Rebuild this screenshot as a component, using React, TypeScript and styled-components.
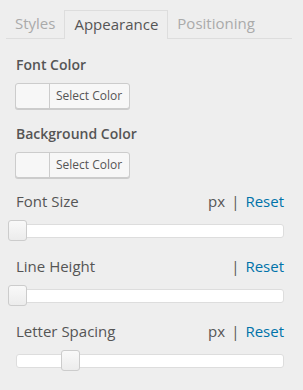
import styled, { createGlobalStyle } from "styled-components";

const GlobalStyle = createGlobalStyle`
    body {
        margin: 0;
        background: #eeeeee;
        font-family: "Open Sans", "Liberation Sans", sans-serif;
        color: #555555;
    }
`;

const Panel = styled.div`
    width: 303px;
    height: 390px;
    padding-top: 10px;
    box-sizing: border-box;
`;

const TabBar = styled.div`
    display: flex;
    margin: 0 11px 0 6px;
    border-bottom: 1px solid #dddddd;
    height: 28px;
`;

const Tab = styled.div<{ $active?: boolean }>`
    padding: 0 ${(p) => (p.$active ? "9px" : "9px")};
    font-size: 15px;
    line-height: 27px;
    box-sizing: border-box;
    color: ${(p) => (p.$active ? "#555555" : "#aaaaaa")};
    border: ${(p) => (p.$active ? "1px solid #dddddd" : "none")};
    border-bottom: none;
    height: ${(p) => (p.$active ? "29px" : "28px")};
    margin-bottom: ${(p) => (p.$active ? "-1px" : "0")};
    background: ${(p) => (p.$active ? "#eeeeee" : "transparent")};
`;

const Content = styled.div`
    display: flex;
    flex-direction: column;
    padding: 16px 19px 0 16px;
`;

const Label = styled.div<{ $strong?: boolean }>`
    font-size: ${(p) => (p.$strong ? "14px" : "15px")};
    font-weight: ${(p) => (p.$strong ? 600 : 400)};
    line-height: 20px;
`;

const Field = styled.div<{ $gap: number }>`
    display: flex;
    flex-direction: column;
    gap: 8px;
    margin-bottom: ${(p) => p.$gap}px;
`;

const ColorButton = styled.div`
    display: flex;
    width: 115px;
    height: 26px;
    box-sizing: border-box;
    margin-left: -1px;
    border: 1px solid #cccccc;
    border-radius: 3px;
    background: #f7f7f7;
    box-shadow: 0 1px 0 #cccccc;
    overflow: hidden;
`;

const Swatch = styled.div`
    width: 33px;
    border-right: 1px solid #cccccc;
`;

const ButtonText = styled.div`
    flex: 1;
    font-size: 12px;
    line-height: 24px;
    padding-left: 6px;
`;

const Header = styled.div`
    display: flex;
    justify-content: space-between;
    align-items: center;
`;

const Units = styled.div`
    font-size: 15px;
    line-height: 20px;
    display: flex;
    gap: 6px;
`;

const ResetLink = styled.span`
    color: #0073aa;
`;

const SliderField = styled.div`
    display: flex;
    flex-direction: column;
    gap: 13px;
    margin-bottom: 18px;
`;

const Track = styled.div`
    position: relative;
    height: 14px;
    box-sizing: border-box;
    background: #ffffff;
    border: 1px solid #dddddd;
    border-radius: 3px;
`;

const Handle = styled.div`
    position: absolute;
    top: -5px;
    width: 19px;
    height: 21px;
    margin-left: -9px;
    box-sizing: border-box;
    border: 1px solid #cccccc;
    border-radius: 3px;
    background: linear-gradient(#f9f9f9, #ececec);
`;

function Slider({ label, unit, value }: { label: string; unit: string; value: number }) {
    return (
        <SliderField>
            <Header>
                <Label>{label}</Label>
                <Units>
                    {unit && <span>{unit}</span>}
                    <span>|</span>
                    <ResetLink>Reset</ResetLink>
                </Units>
            </Header>
            <Track>
                <Handle style={{ left: `${value}%` }} />
            </Track>
        </SliderField>
    );
}

export default function App() {
    return (
        <>
            <GlobalStyle />
            <Panel>
                <TabBar>
                    <Tab>Styles</Tab>
                    <Tab $active>Appearance</Tab>
                    <Tab>Positioning</Tab>
                </TabBar>
                <Content>
                    <Field $gap={15}>
                        <Label $strong>Font Color</Label>
                        <ColorButton>
                            <Swatch />
                            <ButtonText>Select Color</ButtonText>
                        </ColorButton>
                    </Field>
                    <Field $gap={13}>
                        <Label $strong>Background Color</Label>
                        <ColorButton>
                            <Swatch />
                            <ButtonText>Select Color</ButtonText>
                        </ColorButton>
                    </Field>
                    <Slider label="Font Size" unit="px" value={0} />
                    <Slider label="Line Height" unit="" value={0} />
                    <Slider label="Letter Spacing" unit="px" value={20} />
                </Content>
            </Panel>
        </>
    );
}
